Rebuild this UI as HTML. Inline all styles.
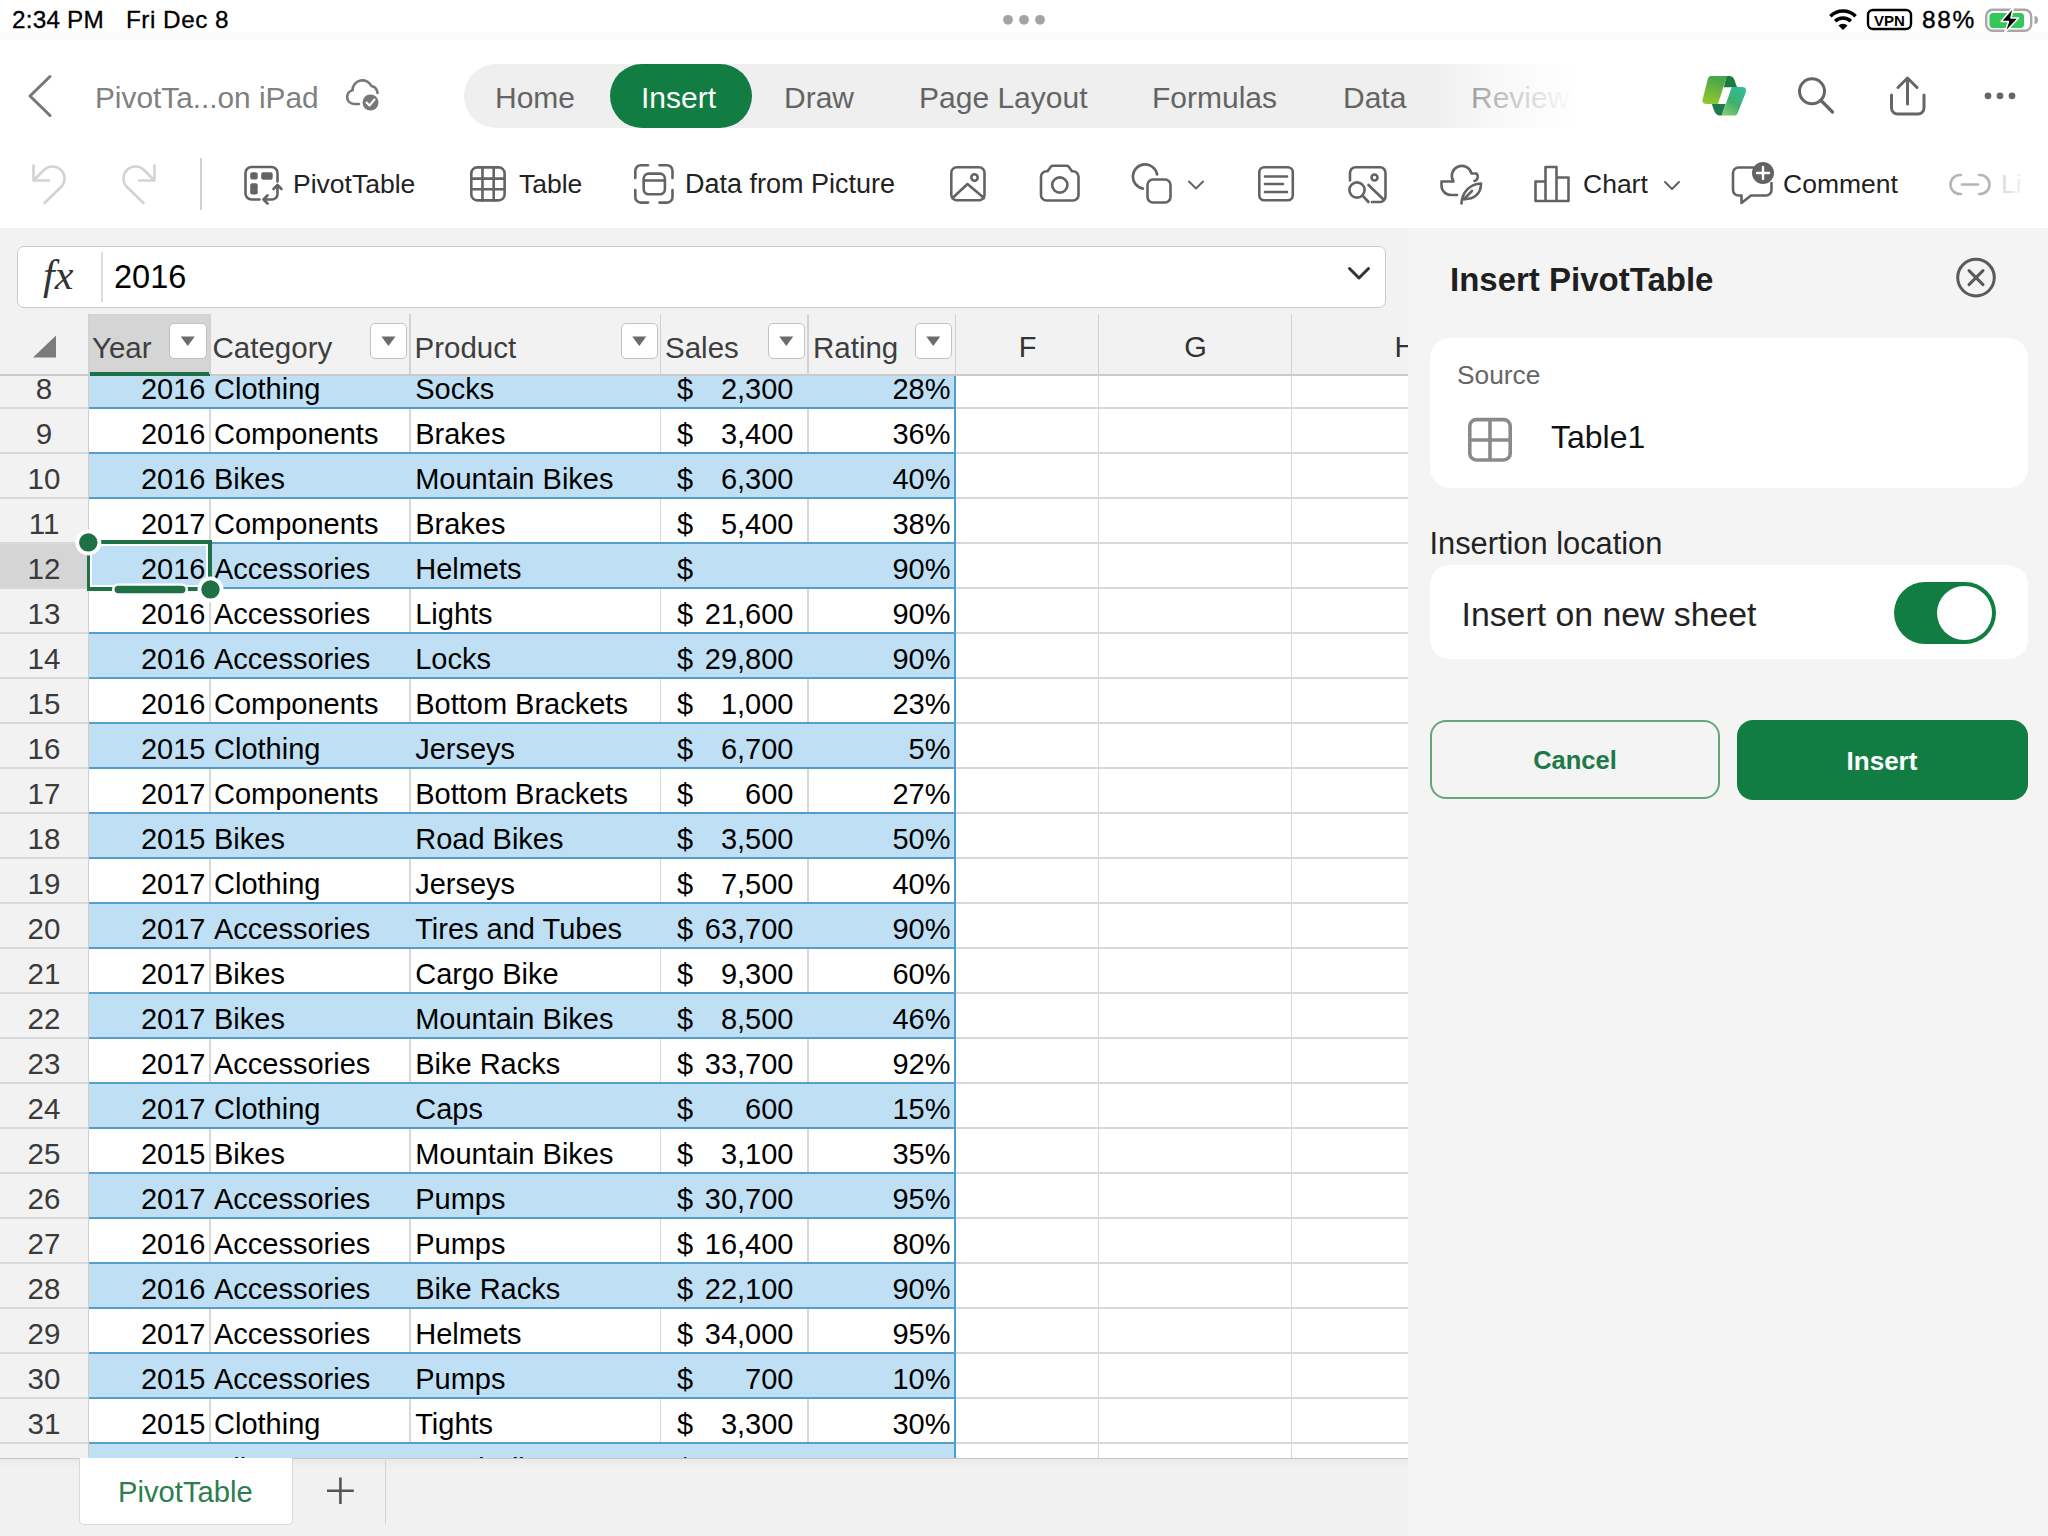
<!DOCTYPE html>
<html><head><meta charset="utf-8">
<style>
*{margin:0;padding:0;box-sizing:border-box}
html,body{width:2048px;height:1536px;overflow:hidden;background:#fff}
body{position:relative;font-family:"Liberation Sans",sans-serif;color:#222}
.a{position:absolute}
.t{position:absolute;white-space:nowrap;line-height:1}
svg{position:absolute;overflow:visible}
#grid{position:absolute;left:0;top:314px;width:1408px;height:1144px;overflow:hidden;background:#fff}
.c{position:absolute;white-space:nowrap;line-height:1;color:#000}
</style></head>
<body>
<div class="a" style="left:0;top:0;width:2048px;height:228px;background:#fff"></div>
<div class="a" style="left:0;top:32px;width:2048px;height:8px;background:#fbfbfb"></div>
<svg width="2048" height="230" style="left:0;top:0">
<circle cx="1008" cy="19.8" r="4.9" fill="#a3a3a3"/><circle cx="1024" cy="19.8" r="4.9" fill="#a3a3a3"/><circle cx="1040" cy="19.8" r="4.9" fill="#a3a3a3"/><g fill="none" stroke="#000" stroke-width="3.6" stroke-linecap="butt"><path d="M1830.4,16.2 A18,18 0 0 1 1855.6,16.2"/><path d="M1835.2,21.2 A11,11 0 0 1 1850.8,21.2"/></g><path d="M1838.4,25.6 A6.5,6.5 0 0 1 1847.6,25.6 L1843,30 Z" fill="#000"/><rect x="1868" y="10" width="43" height="19" rx="5" fill="none" stroke="#000" stroke-width="2.4"/><text x="1889.5" y="25.5" text-anchor="middle" font-family="Liberation Sans" font-weight="bold" font-size="15" fill="#000">VPN</text><rect x="1986.2" y="9.7" width="45" height="21" rx="6.5" fill="none" stroke="#a8a8a8" stroke-width="2.4"/><rect x="1989.5" y="13" width="34.5" height="15" rx="3.5" fill="#34c759"/><path d="M2034.5,16 a3.5,4 0 0 1 0,8 Z" fill="#a8a8a8"/><path d="M2013.5,7 L2001,21.5 H2008.5 L2004.5,33 L2018.5,18 H2011 Z" fill="#000" stroke="#fff" stroke-width="1.6" stroke-linejoin="round"/></svg>
<div class="t" style="left:1922px;top:8.07px;font-size:24.5px;color:#000;letter-spacing:1.6px;-webkit-text-stroke:0.4px #000">88%</div>
<div class="t" style="left:12px;top:8.34px;font-size:24.3px;color:#000;-webkit-text-stroke:0.3px #000;letter-spacing:0.2px">2:34 PM</div>
<div class="t" style="left:126px;top:8.34px;font-size:24.3px;color:#000;-webkit-text-stroke:0.3px #000;letter-spacing:0.5px">Fri Dec 8</div>
<svg width="2048" height="230" style="left:0;top:0">
<path d="M50,76.5 L30,96 L50,115.5" fill="none" stroke="#777" stroke-width="3" stroke-linecap="round" stroke-linejoin="round"/><path d="M359,104 H354 A7,7 0 0 1 352.5,90.2 A10,10 0 0 1 371.5,86 A8,8 0 0 1 377.5,93" fill="none" stroke="#777" stroke-width="2.6" stroke-linecap="round"/><circle cx="370.5" cy="102.5" r="9.5" fill="#fff"/><circle cx="370.5" cy="102.5" r="8" fill="#777"/><path d="M366.5,102.5 L369.5,105.5 L374.5,99.5" fill="none" stroke="#fff" stroke-width="2" stroke-linecap="round" stroke-linejoin="round"/><defs><linearGradient id="fade" x1="0" x2="1" y1="0" y2="0"><stop offset="0" stop-color="#fff" stop-opacity="0"/><stop offset="1" stop-color="#fff" stop-opacity="1"/></linearGradient><linearGradient id="cpL" x1="0" y1="1" x2="0.3" y2="0"><stop offset="0" stop-color="#9cca2e"/><stop offset="1" stop-color="#4aa64a"/></linearGradient><linearGradient id="cpR" x1="0.2" y1="1" x2="0.8" y2="0"><stop offset="0" stop-color="#86c870"/><stop offset="0.45" stop-color="#3fb070"/><stop offset="1" stop-color="#2ebd9c"/></linearGradient></defs><rect x="464" y="64" width="1140" height="64" rx="32" fill="#efefef"/><rect x="610" y="64" width="142" height="64" rx="32" fill="#117d43"/></svg>
<div class="t" style="left:495px;top:83.00px;font-size:30px;color:#646464;">Home</div>
<div class="t" style="left:919px;top:83.00px;font-size:30px;color:#646464;">Page Layout</div>
<div class="t" style="left:784px;top:83.00px;font-size:30px;color:#646464;">Draw</div>
<div class="t" style="left:1152px;top:83.00px;font-size:30px;color:#646464;">Formulas</div>
<div class="t" style="left:1343px;top:83.00px;font-size:30px;color:#646464;">Data</div>
<div class="t" style="left:1471px;top:83.00px;font-size:30px;color:#646464;">Review</div>
<div class="t" style="left:641px;top:83.00px;font-size:30px;color:#fff;">Insert</div>
<div class="a" style="left:1430px;top:60px;width:180px;height:72px;background:linear-gradient(90deg,rgba(255,255,255,0) 0%,rgba(255,255,255,0.55) 35%,#fff 80%)"></div>
<div class="t" style="left:95px;top:83.17px;font-size:29.8px;color:#808080;">PivotTa...on iPad</div>
<svg width="2048" height="230" style="left:0;top:0">
<path d="M1726.5,76.1 L1729.5,76.1 C1733.5,76.3 1735,80 1736,85 L1737.5,87.3 L1723.8,87.3 Z" fill="#1b7a40"/><path d="M1711,76.1 L1726.9,76.1 L1718,103.9 L1706,103.9 C1703,103.9 1702,101.8 1702.6,99.3 L1707.8,79.2 C1708.4,77.2 1709.5,76.1 1711,76.1 Z" fill="url(#cpL)"/><path d="M1712,103.9 L1725.6,103.9 L1721.8,115.6 L1719.5,115.6 C1715.5,115.2 1713.5,110 1712,103.9 Z" fill="#1c7a4c"/><path d="M1731.8,87.1 L1742.5,87.1 C1745.6,87.3 1746.6,89.6 1745.8,92.3 L1737.6,113.2 C1737,114.8 1736,115.6 1734.3,115.6 L1721.8,115.6 Z" fill="url(#cpR)"/><circle cx="1812" cy="91.3" r="12.5" fill="none" stroke="#666" stroke-width="3"/><path d="M1821,100.5 L1832.5,112" stroke="#666" stroke-width="3.2" stroke-linecap="round"/><g fill="none" stroke="#666" stroke-width="3" stroke-linecap="round" stroke-linejoin="round"><path d="M1891.5,95 V108 A6,6 0 0 0 1897.5,114 H1918 A6,6 0 0 0 1924,108 V95"/><path d="M1907.5,79 V104"/><path d="M1898,87.5 L1907.5,78 L1917,87.5"/></g><circle cx="1988" cy="95.8" r="3.4" fill="#666"/><circle cx="2000" cy="95.8" r="3.4" fill="#666"/><circle cx="2012" cy="95.8" r="3.4" fill="#666"/></svg>

<svg width="2048" height="230" style="left:0;top:0">
<g fill="none" stroke="#d3d3d3" stroke-width="2.6" stroke-linecap="round" stroke-linejoin="round"><path d="M33.5,165.5 V180.5 H49"/><path d="M34,180 L44,170 A12,12 0 0 1 61,187 L44.5,203"/></g><g fill="none" stroke="#d3d3d3" stroke-width="2.6" stroke-linecap="round" stroke-linejoin="round"><path d="M154.5,165.5 V180.5 H139"/><path d="M154,180 L144,170 A12,12 0 0 0 127,187 L143.5,203"/></g><rect x="200" y="158" width="2" height="52" fill="#d0d0d0"/><path d="M277.5,181.5 V173 A6,6 0 0 0 271.5,167 H251.5 A6,6 0 0 0 245.5,173 V193.5 A6,6 0 0 0 251.5,199.5 H259.5" fill="none" stroke="#636363" stroke-width="2.6" stroke-linecap="round" stroke-linejoin="round"/><rect x="250.2" y="172.2" width="7.5" height="7.4" rx="2" fill="#636363"/><rect x="261.2" y="172.2" width="11.5" height="7.6" rx="2" fill="#636363"/><rect x="250.2" y="183.2" width="7.5" height="11.4" rx="2" fill="#636363"/><path d="M264,199.5 H272 A5.5,5.5 0 0 0 277.5,194 V186" fill="none" stroke="#636363" stroke-width="2.6" stroke-linecap="round" stroke-linejoin="round"/><path d="M267.5,195.5 L263.5,199.5 L267.5,203.5" fill="none" stroke="#636363" stroke-width="2.6" stroke-linecap="round" stroke-linejoin="round"/><path d="M273.5,189 L277.5,185 L281.5,189" fill="none" stroke="#636363" stroke-width="2.6" stroke-linecap="round" stroke-linejoin="round"/><rect x="471.3" y="167.4" width="33.3" height="33" rx="6" fill="none" stroke="#636363" stroke-width="2.6" stroke-linecap="round" stroke-linejoin="round"/><path d="M482.5,167.5 V200.5 M493.7,167.5 V200.5 M471.5,178.6 H504.5 M471.5,189.3 H504.5" fill="none" stroke="#636363" stroke-width="2.6" stroke-linecap="round" stroke-linejoin="round"/><path d="M635.3,178 V171 A5.5,5.5 0 0 1 640.8,165.3 H648" fill="none" stroke="#636363" stroke-width="2.6" stroke-linecap="round" stroke-linejoin="round"/><path d="M659.5,165.3 H667 A5.5,5.5 0 0 1 672.5,171 V178" fill="none" stroke="#636363" stroke-width="2.6" stroke-linecap="round" stroke-linejoin="round"/><path d="M672.5,190 V197 A5.5,5.5 0 0 1 667,202.6 H659.5" fill="none" stroke="#636363" stroke-width="2.6" stroke-linecap="round" stroke-linejoin="round"/><path d="M648,202.6 H640.8 A5.5,5.5 0 0 1 635.3,197 V190" fill="none" stroke="#636363" stroke-width="2.6" stroke-linecap="round" stroke-linejoin="round"/><rect x="643.7" y="173.6" width="21.2" height="20.6" rx="5" fill="none" stroke="#636363" stroke-width="2.6" stroke-linecap="round" stroke-linejoin="round"/><path d="M644,180.5 H664.5" fill="none" stroke="#636363" stroke-width="2.6" stroke-linecap="round" stroke-linejoin="round"/><rect x="951.3" y="167.3" width="33.2" height="33" rx="5.5" fill="none" stroke="#636363" stroke-width="2.6" stroke-linecap="round" stroke-linejoin="round"/><path d="M952.5,198 L967.5,184 L984,198" fill="none" stroke="#636363" stroke-width="2.6" stroke-linecap="round" stroke-linejoin="round"/><circle cx="974.5" cy="177.5" r="3.2" fill="none" stroke="#636363" stroke-width="2.6" stroke-linecap="round" stroke-linejoin="round"/><path d="M1047.5,171.3 L1050.8,166.8 Q1051.6,165.8 1053,165.8 H1066.5 Q1067.9,165.8 1068.7,166.8 L1072,171.3 H1073 A5.5,5.5 0 0 1 1078.5,176.8 V195 A5.5,5.5 0 0 1 1073,200.5 H1046.5 A5.5,5.5 0 0 1 1041,195 V176.8 A5.5,5.5 0 0 1 1046.5,171.3 Z" fill="none" stroke="#636363" stroke-width="2.6" stroke-linecap="round" stroke-linejoin="round"/><circle cx="1059.8" cy="185" r="7.6" fill="none" stroke="#636363" stroke-width="2.6" stroke-linecap="round" stroke-linejoin="round"/><path d="M1143,188.6 A12.2,12.2 0 1 1 1157.1,174.4" fill="none" stroke="#636363" stroke-width="2.6" stroke-linecap="round" stroke-linejoin="round"/><rect x="1147.5" y="179.5" width="23" height="23" rx="5.5" fill="none" stroke="#636363" stroke-width="2.6" stroke-linecap="round" stroke-linejoin="round"/><path d="M1189,181.5 L1196,188.5 L1203,181.5" fill="none" stroke="#636363" stroke-width="2" stroke-linecap="round" stroke-linejoin="round"/><rect x="1259.3" y="167.3" width="33.5" height="33" rx="5" fill="none" stroke="#636363" stroke-width="2.6" stroke-linecap="round" stroke-linejoin="round"/><path d="M1265,176.5 H1287 M1265,184 H1283 M1265,192 H1287" fill="none" stroke="#636363" stroke-width="2.6" stroke-linecap="round" stroke-linejoin="round"/><path d="M1350,180.5 V173 A5.5,5.5 0 0 1 1355.5,167.3 H1380 A5.5,5.5 0 0 1 1385.5,173 V196.5 A5.5,5.5 0 0 1 1380,202 H1372" fill="none" stroke="#636363" stroke-width="2.6" stroke-linecap="round" stroke-linejoin="round"/><circle cx="1374.5" cy="177.5" r="3" fill="none" stroke="#636363" stroke-width="2.6" stroke-linecap="round" stroke-linejoin="round"/><path d="M1368.5,185 L1383,199" fill="none" stroke="#636363" stroke-width="2.6" stroke-linecap="round" stroke-linejoin="round"/><circle cx="1357" cy="190" r="7.6" fill="none" stroke="#636363" stroke-width="2.6" stroke-linecap="round" stroke-linejoin="round"/><path d="M1362.5,195.5 L1368.5,202" fill="none" stroke="#636363" stroke-width="2.6" stroke-linecap="round" stroke-linejoin="round"/><path d="M1457,195 H1451 A9.5,9.5 0 0 1 1441.5,185.5 V181.5 L1453.5,181.5 A10,10 0 1 1 1471.5,173.5 H1476.5 A4.5,4.5 0 0 1 1474.5,181" fill="none" stroke="#636363" stroke-width="2.6" stroke-linecap="round" stroke-linejoin="round"/><path d="M1461.5,203.5 C1462,192 1470,184 1481,183.5 C1481,194 1474,200 1462,199" fill="none" stroke="#636363" stroke-width="2.6" stroke-linecap="round" stroke-linejoin="round"/><path d="M1464,199 L1472,191" fill="none" stroke="#636363" stroke-width="2.6" stroke-linecap="round" stroke-linejoin="round"/><path d="M1535.5,201 V181.5 H1545.5 V201 M1545.5,201 V167 H1556.5 V201 M1556.5,177.5 H1568.5 V201 H1535.5" fill="none" stroke="#636363" stroke-width="2.6" stroke-linecap="round" stroke-linejoin="round"/><path d="M1665,182 L1672,189 L1679,182" fill="none" stroke="#636363" stroke-width="2" stroke-linecap="round" stroke-linejoin="round"/><path d="M1754,167.5 H1738.5 A5.5,5.5 0 0 0 1733,173 V190 A5.5,5.5 0 0 0 1738.5,195.5 H1741.5 V203 L1751,195.5 H1766 A5.5,5.5 0 0 0 1771.5,190 V183" fill="none" stroke="#636363" stroke-width="2.6" stroke-linecap="round" stroke-linejoin="round"/><circle cx="1763" cy="173" r="11" fill="#636363"/><path d="M1763,167 V179 M1757,173 H1769" stroke="#fff" stroke-width="2.4" stroke-linecap="round"/><g fill="none" stroke="#b5b5b5" stroke-width="2.6" stroke-linecap="round"><path d="M1961,175 H1960 A9.5,9.5 0 0 0 1960,194 H1961"/><path d="M1979,175 H1980 A9.5,9.5 0 0 1 1980,194 H1979"/><path d="M1962,184.5 H1978"/></g></svg>
<div class="t" style="left:293px;top:171.47px;font-size:26.5px;color:#222;">PivotTable</div>
<div class="t" style="left:519px;top:171.47px;font-size:26.5px;color:#222;">Table</div>
<div class="t" style="left:685px;top:171.05px;font-size:27px;color:#222;">Data from Picture</div>
<div class="t" style="left:1583px;top:171.47px;font-size:26.5px;color:#222;">Chart</div>
<div class="t" style="left:1783px;top:171.47px;font-size:26.5px;color:#222;">Comment</div>
<div class="t" style="left:2001px;top:171.47px;font-size:26.5px;color:#d0d0d0;">Li</div>
<div class="a" style="left:1990px;top:160px;width:58px;height:50px;background:linear-gradient(90deg,rgba(255,255,255,0),#fff 80%)"></div>

<div class="a" style="left:0;top:228px;width:1408px;height:86px;background:#f2f2f2"></div>
<div class="a" style="left:16.5px;top:246px;width:1369px;height:61.5px;background:#fff;border:1.5px solid #cbcbcb;border-radius:7px"></div>
<div class="t" style="left:43px;top:253.5px;font-family:'Liberation Serif',serif;font-style:italic;font-size:42px;color:#333">fx</div>
<div class="a" style="left:101px;top:252px;width:1.5px;height:50px;background:#dcdcdc;"></div>
<div class="t" style="left:114px;top:260.88px;font-size:32.5px;color:#000;">2016</div>
<svg width="10" height="10" style="left:0;top:0"><path d="M1349.5,268.5 L1359,278 L1368.5,268.5" fill="none" stroke="#333" stroke-width="3" stroke-linecap="round" stroke-linejoin="round"/></svg>

<div id="grid">
<div class="a" style="left:0;top:-314px;width:1408px;height:1536px">
<div class="a" style="left:89px;top:364px;width:866px;height:43px;background:#bfe0f4;"></div>
<div class="a" style="left:89px;top:454px;width:866px;height:43px;background:#bfe0f4;"></div>
<div class="a" style="left:89px;top:544px;width:866px;height:43px;background:#bfe0f4;"></div>
<div class="a" style="left:89px;top:634px;width:866px;height:43px;background:#bfe0f4;"></div>
<div class="a" style="left:89px;top:724px;width:866px;height:43px;background:#bfe0f4;"></div>
<div class="a" style="left:89px;top:814px;width:866px;height:43px;background:#bfe0f4;"></div>
<div class="a" style="left:89px;top:904px;width:866px;height:43px;background:#bfe0f4;"></div>
<div class="a" style="left:89px;top:994px;width:866px;height:43px;background:#bfe0f4;"></div>
<div class="a" style="left:89px;top:1084px;width:866px;height:43px;background:#bfe0f4;"></div>
<div class="a" style="left:89px;top:1174px;width:866px;height:43px;background:#bfe0f4;"></div>
<div class="a" style="left:89px;top:1264px;width:866px;height:43px;background:#bfe0f4;"></div>
<div class="a" style="left:89px;top:1354px;width:866px;height:43px;background:#bfe0f4;"></div>
<div class="a" style="left:89px;top:1444px;width:866px;height:43px;background:#bfe0f4;"></div>
<div class="a" style="left:209.3px;top:409px;width:1.5px;height:43px;background:#d8d8d8;"></div>
<div class="a" style="left:409.3px;top:409px;width:1.5px;height:43px;background:#d8d8d8;"></div>
<div class="a" style="left:659.8px;top:409px;width:1.5px;height:43px;background:#d8d8d8;"></div>
<div class="a" style="left:807.3px;top:409px;width:1.5px;height:43px;background:#d8d8d8;"></div>
<div class="a" style="left:209.3px;top:499px;width:1.5px;height:43px;background:#d8d8d8;"></div>
<div class="a" style="left:409.3px;top:499px;width:1.5px;height:43px;background:#d8d8d8;"></div>
<div class="a" style="left:659.8px;top:499px;width:1.5px;height:43px;background:#d8d8d8;"></div>
<div class="a" style="left:807.3px;top:499px;width:1.5px;height:43px;background:#d8d8d8;"></div>
<div class="a" style="left:209.3px;top:589px;width:1.5px;height:43px;background:#d8d8d8;"></div>
<div class="a" style="left:409.3px;top:589px;width:1.5px;height:43px;background:#d8d8d8;"></div>
<div class="a" style="left:659.8px;top:589px;width:1.5px;height:43px;background:#d8d8d8;"></div>
<div class="a" style="left:807.3px;top:589px;width:1.5px;height:43px;background:#d8d8d8;"></div>
<div class="a" style="left:209.3px;top:679px;width:1.5px;height:43px;background:#d8d8d8;"></div>
<div class="a" style="left:409.3px;top:679px;width:1.5px;height:43px;background:#d8d8d8;"></div>
<div class="a" style="left:659.8px;top:679px;width:1.5px;height:43px;background:#d8d8d8;"></div>
<div class="a" style="left:807.3px;top:679px;width:1.5px;height:43px;background:#d8d8d8;"></div>
<div class="a" style="left:209.3px;top:769px;width:1.5px;height:43px;background:#d8d8d8;"></div>
<div class="a" style="left:409.3px;top:769px;width:1.5px;height:43px;background:#d8d8d8;"></div>
<div class="a" style="left:659.8px;top:769px;width:1.5px;height:43px;background:#d8d8d8;"></div>
<div class="a" style="left:807.3px;top:769px;width:1.5px;height:43px;background:#d8d8d8;"></div>
<div class="a" style="left:209.3px;top:859px;width:1.5px;height:43px;background:#d8d8d8;"></div>
<div class="a" style="left:409.3px;top:859px;width:1.5px;height:43px;background:#d8d8d8;"></div>
<div class="a" style="left:659.8px;top:859px;width:1.5px;height:43px;background:#d8d8d8;"></div>
<div class="a" style="left:807.3px;top:859px;width:1.5px;height:43px;background:#d8d8d8;"></div>
<div class="a" style="left:209.3px;top:949px;width:1.5px;height:43px;background:#d8d8d8;"></div>
<div class="a" style="left:409.3px;top:949px;width:1.5px;height:43px;background:#d8d8d8;"></div>
<div class="a" style="left:659.8px;top:949px;width:1.5px;height:43px;background:#d8d8d8;"></div>
<div class="a" style="left:807.3px;top:949px;width:1.5px;height:43px;background:#d8d8d8;"></div>
<div class="a" style="left:209.3px;top:1039px;width:1.5px;height:43px;background:#d8d8d8;"></div>
<div class="a" style="left:409.3px;top:1039px;width:1.5px;height:43px;background:#d8d8d8;"></div>
<div class="a" style="left:659.8px;top:1039px;width:1.5px;height:43px;background:#d8d8d8;"></div>
<div class="a" style="left:807.3px;top:1039px;width:1.5px;height:43px;background:#d8d8d8;"></div>
<div class="a" style="left:209.3px;top:1129px;width:1.5px;height:43px;background:#d8d8d8;"></div>
<div class="a" style="left:409.3px;top:1129px;width:1.5px;height:43px;background:#d8d8d8;"></div>
<div class="a" style="left:659.8px;top:1129px;width:1.5px;height:43px;background:#d8d8d8;"></div>
<div class="a" style="left:807.3px;top:1129px;width:1.5px;height:43px;background:#d8d8d8;"></div>
<div class="a" style="left:209.3px;top:1219px;width:1.5px;height:43px;background:#d8d8d8;"></div>
<div class="a" style="left:409.3px;top:1219px;width:1.5px;height:43px;background:#d8d8d8;"></div>
<div class="a" style="left:659.8px;top:1219px;width:1.5px;height:43px;background:#d8d8d8;"></div>
<div class="a" style="left:807.3px;top:1219px;width:1.5px;height:43px;background:#d8d8d8;"></div>
<div class="a" style="left:209.3px;top:1309px;width:1.5px;height:43px;background:#d8d8d8;"></div>
<div class="a" style="left:409.3px;top:1309px;width:1.5px;height:43px;background:#d8d8d8;"></div>
<div class="a" style="left:659.8px;top:1309px;width:1.5px;height:43px;background:#d8d8d8;"></div>
<div class="a" style="left:807.3px;top:1309px;width:1.5px;height:43px;background:#d8d8d8;"></div>
<div class="a" style="left:209.3px;top:1399px;width:1.5px;height:43px;background:#d8d8d8;"></div>
<div class="a" style="left:409.3px;top:1399px;width:1.5px;height:43px;background:#d8d8d8;"></div>
<div class="a" style="left:659.8px;top:1399px;width:1.5px;height:43px;background:#d8d8d8;"></div>
<div class="a" style="left:807.3px;top:1399px;width:1.5px;height:43px;background:#d8d8d8;"></div>
<div class="a" style="left:1097.8px;top:376px;width:1.6px;height:1144px;background:#d8d8d8;"></div>
<div class="a" style="left:1290.5px;top:376px;width:1.6px;height:1144px;background:#d8d8d8;"></div>
<div class="a" style="left:0px;top:362px;width:88px;height:2px;background:#d8d8d8;"></div>
<div class="a" style="left:89px;top:362px;width:867px;height:2px;background:#549dcc;"></div>
<div class="a" style="left:956px;top:362px;width:452px;height:2px;background:#d8d8d8;"></div>
<div class="a" style="left:0px;top:407px;width:88px;height:2px;background:#d8d8d8;"></div>
<div class="a" style="left:89px;top:407px;width:867px;height:2px;background:#549dcc;"></div>
<div class="a" style="left:956px;top:407px;width:452px;height:2px;background:#d8d8d8;"></div>
<div class="a" style="left:0px;top:452px;width:88px;height:2px;background:#d8d8d8;"></div>
<div class="a" style="left:89px;top:452px;width:867px;height:2px;background:#549dcc;"></div>
<div class="a" style="left:956px;top:452px;width:452px;height:2px;background:#d8d8d8;"></div>
<div class="a" style="left:0px;top:497px;width:88px;height:2px;background:#d8d8d8;"></div>
<div class="a" style="left:89px;top:497px;width:867px;height:2px;background:#549dcc;"></div>
<div class="a" style="left:956px;top:497px;width:452px;height:2px;background:#d8d8d8;"></div>
<div class="a" style="left:0px;top:542px;width:88px;height:2px;background:#d8d8d8;"></div>
<div class="a" style="left:89px;top:542px;width:867px;height:2px;background:#549dcc;"></div>
<div class="a" style="left:956px;top:542px;width:452px;height:2px;background:#d8d8d8;"></div>
<div class="a" style="left:0px;top:587px;width:88px;height:2px;background:#d8d8d8;"></div>
<div class="a" style="left:89px;top:587px;width:867px;height:2px;background:#549dcc;"></div>
<div class="a" style="left:956px;top:587px;width:452px;height:2px;background:#d8d8d8;"></div>
<div class="a" style="left:0px;top:632px;width:88px;height:2px;background:#d8d8d8;"></div>
<div class="a" style="left:89px;top:632px;width:867px;height:2px;background:#549dcc;"></div>
<div class="a" style="left:956px;top:632px;width:452px;height:2px;background:#d8d8d8;"></div>
<div class="a" style="left:0px;top:677px;width:88px;height:2px;background:#d8d8d8;"></div>
<div class="a" style="left:89px;top:677px;width:867px;height:2px;background:#549dcc;"></div>
<div class="a" style="left:956px;top:677px;width:452px;height:2px;background:#d8d8d8;"></div>
<div class="a" style="left:0px;top:722px;width:88px;height:2px;background:#d8d8d8;"></div>
<div class="a" style="left:89px;top:722px;width:867px;height:2px;background:#549dcc;"></div>
<div class="a" style="left:956px;top:722px;width:452px;height:2px;background:#d8d8d8;"></div>
<div class="a" style="left:0px;top:767px;width:88px;height:2px;background:#d8d8d8;"></div>
<div class="a" style="left:89px;top:767px;width:867px;height:2px;background:#549dcc;"></div>
<div class="a" style="left:956px;top:767px;width:452px;height:2px;background:#d8d8d8;"></div>
<div class="a" style="left:0px;top:812px;width:88px;height:2px;background:#d8d8d8;"></div>
<div class="a" style="left:89px;top:812px;width:867px;height:2px;background:#549dcc;"></div>
<div class="a" style="left:956px;top:812px;width:452px;height:2px;background:#d8d8d8;"></div>
<div class="a" style="left:0px;top:857px;width:88px;height:2px;background:#d8d8d8;"></div>
<div class="a" style="left:89px;top:857px;width:867px;height:2px;background:#549dcc;"></div>
<div class="a" style="left:956px;top:857px;width:452px;height:2px;background:#d8d8d8;"></div>
<div class="a" style="left:0px;top:902px;width:88px;height:2px;background:#d8d8d8;"></div>
<div class="a" style="left:89px;top:902px;width:867px;height:2px;background:#549dcc;"></div>
<div class="a" style="left:956px;top:902px;width:452px;height:2px;background:#d8d8d8;"></div>
<div class="a" style="left:0px;top:947px;width:88px;height:2px;background:#d8d8d8;"></div>
<div class="a" style="left:89px;top:947px;width:867px;height:2px;background:#549dcc;"></div>
<div class="a" style="left:956px;top:947px;width:452px;height:2px;background:#d8d8d8;"></div>
<div class="a" style="left:0px;top:992px;width:88px;height:2px;background:#d8d8d8;"></div>
<div class="a" style="left:89px;top:992px;width:867px;height:2px;background:#549dcc;"></div>
<div class="a" style="left:956px;top:992px;width:452px;height:2px;background:#d8d8d8;"></div>
<div class="a" style="left:0px;top:1037px;width:88px;height:2px;background:#d8d8d8;"></div>
<div class="a" style="left:89px;top:1037px;width:867px;height:2px;background:#549dcc;"></div>
<div class="a" style="left:956px;top:1037px;width:452px;height:2px;background:#d8d8d8;"></div>
<div class="a" style="left:0px;top:1082px;width:88px;height:2px;background:#d8d8d8;"></div>
<div class="a" style="left:89px;top:1082px;width:867px;height:2px;background:#549dcc;"></div>
<div class="a" style="left:956px;top:1082px;width:452px;height:2px;background:#d8d8d8;"></div>
<div class="a" style="left:0px;top:1127px;width:88px;height:2px;background:#d8d8d8;"></div>
<div class="a" style="left:89px;top:1127px;width:867px;height:2px;background:#549dcc;"></div>
<div class="a" style="left:956px;top:1127px;width:452px;height:2px;background:#d8d8d8;"></div>
<div class="a" style="left:0px;top:1172px;width:88px;height:2px;background:#d8d8d8;"></div>
<div class="a" style="left:89px;top:1172px;width:867px;height:2px;background:#549dcc;"></div>
<div class="a" style="left:956px;top:1172px;width:452px;height:2px;background:#d8d8d8;"></div>
<div class="a" style="left:0px;top:1217px;width:88px;height:2px;background:#d8d8d8;"></div>
<div class="a" style="left:89px;top:1217px;width:867px;height:2px;background:#549dcc;"></div>
<div class="a" style="left:956px;top:1217px;width:452px;height:2px;background:#d8d8d8;"></div>
<div class="a" style="left:0px;top:1262px;width:88px;height:2px;background:#d8d8d8;"></div>
<div class="a" style="left:89px;top:1262px;width:867px;height:2px;background:#549dcc;"></div>
<div class="a" style="left:956px;top:1262px;width:452px;height:2px;background:#d8d8d8;"></div>
<div class="a" style="left:0px;top:1307px;width:88px;height:2px;background:#d8d8d8;"></div>
<div class="a" style="left:89px;top:1307px;width:867px;height:2px;background:#549dcc;"></div>
<div class="a" style="left:956px;top:1307px;width:452px;height:2px;background:#d8d8d8;"></div>
<div class="a" style="left:0px;top:1352px;width:88px;height:2px;background:#d8d8d8;"></div>
<div class="a" style="left:89px;top:1352px;width:867px;height:2px;background:#549dcc;"></div>
<div class="a" style="left:956px;top:1352px;width:452px;height:2px;background:#d8d8d8;"></div>
<div class="a" style="left:0px;top:1397px;width:88px;height:2px;background:#d8d8d8;"></div>
<div class="a" style="left:89px;top:1397px;width:867px;height:2px;background:#549dcc;"></div>
<div class="a" style="left:956px;top:1397px;width:452px;height:2px;background:#d8d8d8;"></div>
<div class="a" style="left:0px;top:1442px;width:88px;height:2px;background:#d8d8d8;"></div>
<div class="a" style="left:89px;top:1442px;width:867px;height:2px;background:#549dcc;"></div>
<div class="a" style="left:956px;top:1442px;width:452px;height:2px;background:#d8d8d8;"></div>
<div class="a" style="left:0px;top:1487px;width:88px;height:2px;background:#d8d8d8;"></div>
<div class="a" style="left:89px;top:1487px;width:867px;height:2px;background:#549dcc;"></div>
<div class="a" style="left:956px;top:1487px;width:452px;height:2px;background:#d8d8d8;"></div>
<div class="a" style="left:954px;top:376px;width:2px;height:1100px;background:#4c9fd0;"></div>
<div class="a" style="left:0px;top:376px;width:88px;height:1100px;background:rgba(0,0,0,0);"></div>
<div class="t" style="left:-794.5px;width:1000px;text-align:right;top:374.85px;font-size:29px;color:#000;">2016</div>
<div class="t" style="left:214px;top:374.85px;font-size:29px;color:#000;">Clothing</div>
<div class="t" style="left:415.2px;top:374.85px;font-size:29px;color:#000;">Socks</div>
<div class="t" style="left:677px;top:374.85px;font-size:29px;color:#000;">$</div>
<div class="t" style="left:-206.5px;width:1000px;text-align:right;top:374.85px;font-size:29px;color:#000;">2,300</div>
<div class="t" style="left:-49.5px;width:1000px;text-align:right;top:374.85px;font-size:29px;color:#000;">28%</div>
<div class="t" style="left:-794.5px;width:1000px;text-align:right;top:419.85px;font-size:29px;color:#000;">2016</div>
<div class="t" style="left:214px;top:419.85px;font-size:29px;color:#000;">Components</div>
<div class="t" style="left:415.2px;top:419.85px;font-size:29px;color:#000;">Brakes</div>
<div class="t" style="left:677px;top:419.85px;font-size:29px;color:#000;">$</div>
<div class="t" style="left:-206.5px;width:1000px;text-align:right;top:419.85px;font-size:29px;color:#000;">3,400</div>
<div class="t" style="left:-49.5px;width:1000px;text-align:right;top:419.85px;font-size:29px;color:#000;">36%</div>
<div class="t" style="left:-794.5px;width:1000px;text-align:right;top:464.85px;font-size:29px;color:#000;">2016</div>
<div class="t" style="left:214px;top:464.85px;font-size:29px;color:#000;">Bikes</div>
<div class="t" style="left:415.2px;top:464.85px;font-size:29px;color:#000;">Mountain Bikes</div>
<div class="t" style="left:677px;top:464.85px;font-size:29px;color:#000;">$</div>
<div class="t" style="left:-206.5px;width:1000px;text-align:right;top:464.85px;font-size:29px;color:#000;">6,300</div>
<div class="t" style="left:-49.5px;width:1000px;text-align:right;top:464.85px;font-size:29px;color:#000;">40%</div>
<div class="t" style="left:-794.5px;width:1000px;text-align:right;top:509.85px;font-size:29px;color:#000;">2017</div>
<div class="t" style="left:214px;top:509.85px;font-size:29px;color:#000;">Components</div>
<div class="t" style="left:415.2px;top:509.85px;font-size:29px;color:#000;">Brakes</div>
<div class="t" style="left:677px;top:509.85px;font-size:29px;color:#000;">$</div>
<div class="t" style="left:-206.5px;width:1000px;text-align:right;top:509.85px;font-size:29px;color:#000;">5,400</div>
<div class="t" style="left:-49.5px;width:1000px;text-align:right;top:509.85px;font-size:29px;color:#000;">38%</div>
<div class="t" style="left:-794.5px;width:1000px;text-align:right;top:554.85px;font-size:29px;color:#000;">2016</div>
<div class="t" style="left:214px;top:554.85px;font-size:29px;color:#000;">Accessories</div>
<div class="t" style="left:415.2px;top:554.85px;font-size:29px;color:#000;">Helmets</div>
<div class="t" style="left:677px;top:554.85px;font-size:29px;color:#000;">$</div>
<div class="t" style="left:-49.5px;width:1000px;text-align:right;top:554.85px;font-size:29px;color:#000;">90%</div>
<div class="t" style="left:-794.5px;width:1000px;text-align:right;top:599.85px;font-size:29px;color:#000;">2016</div>
<div class="t" style="left:214px;top:599.85px;font-size:29px;color:#000;">Accessories</div>
<div class="t" style="left:415.2px;top:599.85px;font-size:29px;color:#000;">Lights</div>
<div class="t" style="left:677px;top:599.85px;font-size:29px;color:#000;">$</div>
<div class="t" style="left:-206.5px;width:1000px;text-align:right;top:599.85px;font-size:29px;color:#000;">21,600</div>
<div class="t" style="left:-49.5px;width:1000px;text-align:right;top:599.85px;font-size:29px;color:#000;">90%</div>
<div class="t" style="left:-794.5px;width:1000px;text-align:right;top:644.85px;font-size:29px;color:#000;">2016</div>
<div class="t" style="left:214px;top:644.85px;font-size:29px;color:#000;">Accessories</div>
<div class="t" style="left:415.2px;top:644.85px;font-size:29px;color:#000;">Locks</div>
<div class="t" style="left:677px;top:644.85px;font-size:29px;color:#000;">$</div>
<div class="t" style="left:-206.5px;width:1000px;text-align:right;top:644.85px;font-size:29px;color:#000;">29,800</div>
<div class="t" style="left:-49.5px;width:1000px;text-align:right;top:644.85px;font-size:29px;color:#000;">90%</div>
<div class="t" style="left:-794.5px;width:1000px;text-align:right;top:689.85px;font-size:29px;color:#000;">2016</div>
<div class="t" style="left:214px;top:689.85px;font-size:29px;color:#000;">Components</div>
<div class="t" style="left:415.2px;top:689.85px;font-size:29px;color:#000;">Bottom Brackets</div>
<div class="t" style="left:677px;top:689.85px;font-size:29px;color:#000;">$</div>
<div class="t" style="left:-206.5px;width:1000px;text-align:right;top:689.85px;font-size:29px;color:#000;">1,000</div>
<div class="t" style="left:-49.5px;width:1000px;text-align:right;top:689.85px;font-size:29px;color:#000;">23%</div>
<div class="t" style="left:-794.5px;width:1000px;text-align:right;top:734.85px;font-size:29px;color:#000;">2015</div>
<div class="t" style="left:214px;top:734.85px;font-size:29px;color:#000;">Clothing</div>
<div class="t" style="left:415.2px;top:734.85px;font-size:29px;color:#000;">Jerseys</div>
<div class="t" style="left:677px;top:734.85px;font-size:29px;color:#000;">$</div>
<div class="t" style="left:-206.5px;width:1000px;text-align:right;top:734.85px;font-size:29px;color:#000;">6,700</div>
<div class="t" style="left:-49.5px;width:1000px;text-align:right;top:734.85px;font-size:29px;color:#000;">5%</div>
<div class="t" style="left:-794.5px;width:1000px;text-align:right;top:779.85px;font-size:29px;color:#000;">2017</div>
<div class="t" style="left:214px;top:779.85px;font-size:29px;color:#000;">Components</div>
<div class="t" style="left:415.2px;top:779.85px;font-size:29px;color:#000;">Bottom Brackets</div>
<div class="t" style="left:677px;top:779.85px;font-size:29px;color:#000;">$</div>
<div class="t" style="left:-206.5px;width:1000px;text-align:right;top:779.85px;font-size:29px;color:#000;">600</div>
<div class="t" style="left:-49.5px;width:1000px;text-align:right;top:779.85px;font-size:29px;color:#000;">27%</div>
<div class="t" style="left:-794.5px;width:1000px;text-align:right;top:824.85px;font-size:29px;color:#000;">2015</div>
<div class="t" style="left:214px;top:824.85px;font-size:29px;color:#000;">Bikes</div>
<div class="t" style="left:415.2px;top:824.85px;font-size:29px;color:#000;">Road Bikes</div>
<div class="t" style="left:677px;top:824.85px;font-size:29px;color:#000;">$</div>
<div class="t" style="left:-206.5px;width:1000px;text-align:right;top:824.85px;font-size:29px;color:#000;">3,500</div>
<div class="t" style="left:-49.5px;width:1000px;text-align:right;top:824.85px;font-size:29px;color:#000;">50%</div>
<div class="t" style="left:-794.5px;width:1000px;text-align:right;top:869.85px;font-size:29px;color:#000;">2017</div>
<div class="t" style="left:214px;top:869.85px;font-size:29px;color:#000;">Clothing</div>
<div class="t" style="left:415.2px;top:869.85px;font-size:29px;color:#000;">Jerseys</div>
<div class="t" style="left:677px;top:869.85px;font-size:29px;color:#000;">$</div>
<div class="t" style="left:-206.5px;width:1000px;text-align:right;top:869.85px;font-size:29px;color:#000;">7,500</div>
<div class="t" style="left:-49.5px;width:1000px;text-align:right;top:869.85px;font-size:29px;color:#000;">40%</div>
<div class="t" style="left:-794.5px;width:1000px;text-align:right;top:914.85px;font-size:29px;color:#000;">2017</div>
<div class="t" style="left:214px;top:914.85px;font-size:29px;color:#000;">Accessories</div>
<div class="t" style="left:415.2px;top:914.85px;font-size:29px;color:#000;">Tires and Tubes</div>
<div class="t" style="left:677px;top:914.85px;font-size:29px;color:#000;">$</div>
<div class="t" style="left:-206.5px;width:1000px;text-align:right;top:914.85px;font-size:29px;color:#000;">63,700</div>
<div class="t" style="left:-49.5px;width:1000px;text-align:right;top:914.85px;font-size:29px;color:#000;">90%</div>
<div class="t" style="left:-794.5px;width:1000px;text-align:right;top:959.85px;font-size:29px;color:#000;">2017</div>
<div class="t" style="left:214px;top:959.85px;font-size:29px;color:#000;">Bikes</div>
<div class="t" style="left:415.2px;top:959.85px;font-size:29px;color:#000;">Cargo Bike</div>
<div class="t" style="left:677px;top:959.85px;font-size:29px;color:#000;">$</div>
<div class="t" style="left:-206.5px;width:1000px;text-align:right;top:959.85px;font-size:29px;color:#000;">9,300</div>
<div class="t" style="left:-49.5px;width:1000px;text-align:right;top:959.85px;font-size:29px;color:#000;">60%</div>
<div class="t" style="left:-794.5px;width:1000px;text-align:right;top:1004.85px;font-size:29px;color:#000;">2017</div>
<div class="t" style="left:214px;top:1004.85px;font-size:29px;color:#000;">Bikes</div>
<div class="t" style="left:415.2px;top:1004.85px;font-size:29px;color:#000;">Mountain Bikes</div>
<div class="t" style="left:677px;top:1004.85px;font-size:29px;color:#000;">$</div>
<div class="t" style="left:-206.5px;width:1000px;text-align:right;top:1004.85px;font-size:29px;color:#000;">8,500</div>
<div class="t" style="left:-49.5px;width:1000px;text-align:right;top:1004.85px;font-size:29px;color:#000;">46%</div>
<div class="t" style="left:-794.5px;width:1000px;text-align:right;top:1049.85px;font-size:29px;color:#000;">2017</div>
<div class="t" style="left:214px;top:1049.85px;font-size:29px;color:#000;">Accessories</div>
<div class="t" style="left:415.2px;top:1049.85px;font-size:29px;color:#000;">Bike Racks</div>
<div class="t" style="left:677px;top:1049.85px;font-size:29px;color:#000;">$</div>
<div class="t" style="left:-206.5px;width:1000px;text-align:right;top:1049.85px;font-size:29px;color:#000;">33,700</div>
<div class="t" style="left:-49.5px;width:1000px;text-align:right;top:1049.85px;font-size:29px;color:#000;">92%</div>
<div class="t" style="left:-794.5px;width:1000px;text-align:right;top:1094.85px;font-size:29px;color:#000;">2017</div>
<div class="t" style="left:214px;top:1094.85px;font-size:29px;color:#000;">Clothing</div>
<div class="t" style="left:415.2px;top:1094.85px;font-size:29px;color:#000;">Caps</div>
<div class="t" style="left:677px;top:1094.85px;font-size:29px;color:#000;">$</div>
<div class="t" style="left:-206.5px;width:1000px;text-align:right;top:1094.85px;font-size:29px;color:#000;">600</div>
<div class="t" style="left:-49.5px;width:1000px;text-align:right;top:1094.85px;font-size:29px;color:#000;">15%</div>
<div class="t" style="left:-794.5px;width:1000px;text-align:right;top:1139.85px;font-size:29px;color:#000;">2015</div>
<div class="t" style="left:214px;top:1139.85px;font-size:29px;color:#000;">Bikes</div>
<div class="t" style="left:415.2px;top:1139.85px;font-size:29px;color:#000;">Mountain Bikes</div>
<div class="t" style="left:677px;top:1139.85px;font-size:29px;color:#000;">$</div>
<div class="t" style="left:-206.5px;width:1000px;text-align:right;top:1139.85px;font-size:29px;color:#000;">3,100</div>
<div class="t" style="left:-49.5px;width:1000px;text-align:right;top:1139.85px;font-size:29px;color:#000;">35%</div>
<div class="t" style="left:-794.5px;width:1000px;text-align:right;top:1184.85px;font-size:29px;color:#000;">2017</div>
<div class="t" style="left:214px;top:1184.85px;font-size:29px;color:#000;">Accessories</div>
<div class="t" style="left:415.2px;top:1184.85px;font-size:29px;color:#000;">Pumps</div>
<div class="t" style="left:677px;top:1184.85px;font-size:29px;color:#000;">$</div>
<div class="t" style="left:-206.5px;width:1000px;text-align:right;top:1184.85px;font-size:29px;color:#000;">30,700</div>
<div class="t" style="left:-49.5px;width:1000px;text-align:right;top:1184.85px;font-size:29px;color:#000;">95%</div>
<div class="t" style="left:-794.5px;width:1000px;text-align:right;top:1229.85px;font-size:29px;color:#000;">2016</div>
<div class="t" style="left:214px;top:1229.85px;font-size:29px;color:#000;">Accessories</div>
<div class="t" style="left:415.2px;top:1229.85px;font-size:29px;color:#000;">Pumps</div>
<div class="t" style="left:677px;top:1229.85px;font-size:29px;color:#000;">$</div>
<div class="t" style="left:-206.5px;width:1000px;text-align:right;top:1229.85px;font-size:29px;color:#000;">16,400</div>
<div class="t" style="left:-49.5px;width:1000px;text-align:right;top:1229.85px;font-size:29px;color:#000;">80%</div>
<div class="t" style="left:-794.5px;width:1000px;text-align:right;top:1274.85px;font-size:29px;color:#000;">2016</div>
<div class="t" style="left:214px;top:1274.85px;font-size:29px;color:#000;">Accessories</div>
<div class="t" style="left:415.2px;top:1274.85px;font-size:29px;color:#000;">Bike Racks</div>
<div class="t" style="left:677px;top:1274.85px;font-size:29px;color:#000;">$</div>
<div class="t" style="left:-206.5px;width:1000px;text-align:right;top:1274.85px;font-size:29px;color:#000;">22,100</div>
<div class="t" style="left:-49.5px;width:1000px;text-align:right;top:1274.85px;font-size:29px;color:#000;">90%</div>
<div class="t" style="left:-794.5px;width:1000px;text-align:right;top:1319.85px;font-size:29px;color:#000;">2017</div>
<div class="t" style="left:214px;top:1319.85px;font-size:29px;color:#000;">Accessories</div>
<div class="t" style="left:415.2px;top:1319.85px;font-size:29px;color:#000;">Helmets</div>
<div class="t" style="left:677px;top:1319.85px;font-size:29px;color:#000;">$</div>
<div class="t" style="left:-206.5px;width:1000px;text-align:right;top:1319.85px;font-size:29px;color:#000;">34,000</div>
<div class="t" style="left:-49.5px;width:1000px;text-align:right;top:1319.85px;font-size:29px;color:#000;">95%</div>
<div class="t" style="left:-794.5px;width:1000px;text-align:right;top:1364.85px;font-size:29px;color:#000;">2015</div>
<div class="t" style="left:214px;top:1364.85px;font-size:29px;color:#000;">Accessories</div>
<div class="t" style="left:415.2px;top:1364.85px;font-size:29px;color:#000;">Pumps</div>
<div class="t" style="left:677px;top:1364.85px;font-size:29px;color:#000;">$</div>
<div class="t" style="left:-206.5px;width:1000px;text-align:right;top:1364.85px;font-size:29px;color:#000;">700</div>
<div class="t" style="left:-49.5px;width:1000px;text-align:right;top:1364.85px;font-size:29px;color:#000;">10%</div>
<div class="t" style="left:-794.5px;width:1000px;text-align:right;top:1409.85px;font-size:29px;color:#000;">2015</div>
<div class="t" style="left:214px;top:1409.85px;font-size:29px;color:#000;">Clothing</div>
<div class="t" style="left:415.2px;top:1409.85px;font-size:29px;color:#000;">Tights</div>
<div class="t" style="left:677px;top:1409.85px;font-size:29px;color:#000;">$</div>
<div class="t" style="left:-206.5px;width:1000px;text-align:right;top:1409.85px;font-size:29px;color:#000;">3,300</div>
<div class="t" style="left:-49.5px;width:1000px;text-align:right;top:1409.85px;font-size:29px;color:#000;">30%</div>
<div class="t" style="left:-794.5px;width:1000px;text-align:right;top:1454.85px;font-size:29px;color:#000;">2016</div>
<div class="t" style="left:214px;top:1454.85px;font-size:29px;color:#000;">Bikes</div>
<div class="t" style="left:415.2px;top:1454.85px;font-size:29px;color:#000;">Road Bikes</div>
<div class="t" style="left:677px;top:1454.85px;font-size:29px;color:#000;">$</div>
<div class="t" style="left:-206.5px;width:1000px;text-align:right;top:1454.85px;font-size:29px;color:#000;">11,600</div>
<div class="t" style="left:-49.5px;width:1000px;text-align:right;top:1454.85px;font-size:29px;color:#000;">90%</div>
<div class="a" style="left:0px;top:376px;width:88px;height:1100px;background:#f2f2f2;z-index:0"></div>
<div class="a" style="left:0px;top:362px;width:88px;height:2px;background:#d8d8d8;"></div>
<div class="a" style="left:0px;top:407px;width:88px;height:2px;background:#d8d8d8;"></div>
<div class="a" style="left:0px;top:452px;width:88px;height:2px;background:#d8d8d8;"></div>
<div class="a" style="left:0px;top:497px;width:88px;height:2px;background:#d8d8d8;"></div>
<div class="a" style="left:0px;top:542px;width:88px;height:2px;background:#d8d8d8;"></div>
<div class="a" style="left:0px;top:587px;width:88px;height:2px;background:#d8d8d8;"></div>
<div class="a" style="left:0px;top:632px;width:88px;height:2px;background:#d8d8d8;"></div>
<div class="a" style="left:0px;top:677px;width:88px;height:2px;background:#d8d8d8;"></div>
<div class="a" style="left:0px;top:722px;width:88px;height:2px;background:#d8d8d8;"></div>
<div class="a" style="left:0px;top:767px;width:88px;height:2px;background:#d8d8d8;"></div>
<div class="a" style="left:0px;top:812px;width:88px;height:2px;background:#d8d8d8;"></div>
<div class="a" style="left:0px;top:857px;width:88px;height:2px;background:#d8d8d8;"></div>
<div class="a" style="left:0px;top:902px;width:88px;height:2px;background:#d8d8d8;"></div>
<div class="a" style="left:0px;top:947px;width:88px;height:2px;background:#d8d8d8;"></div>
<div class="a" style="left:0px;top:992px;width:88px;height:2px;background:#d8d8d8;"></div>
<div class="a" style="left:0px;top:1037px;width:88px;height:2px;background:#d8d8d8;"></div>
<div class="a" style="left:0px;top:1082px;width:88px;height:2px;background:#d8d8d8;"></div>
<div class="a" style="left:0px;top:1127px;width:88px;height:2px;background:#d8d8d8;"></div>
<div class="a" style="left:0px;top:1172px;width:88px;height:2px;background:#d8d8d8;"></div>
<div class="a" style="left:0px;top:1217px;width:88px;height:2px;background:#d8d8d8;"></div>
<div class="a" style="left:0px;top:1262px;width:88px;height:2px;background:#d8d8d8;"></div>
<div class="a" style="left:0px;top:1307px;width:88px;height:2px;background:#d8d8d8;"></div>
<div class="a" style="left:0px;top:1352px;width:88px;height:2px;background:#d8d8d8;"></div>
<div class="a" style="left:0px;top:1397px;width:88px;height:2px;background:#d8d8d8;"></div>
<div class="a" style="left:0px;top:1442px;width:88px;height:2px;background:#d8d8d8;"></div>
<div class="a" style="left:0px;top:1487px;width:88px;height:2px;background:#d8d8d8;"></div>
<div class="a" style="left:0px;top:544px;width:88px;height:43px;background:#d5d5d5;"></div>
<div class="a" style="left:88px;top:376px;width:1.3px;height:1100px;background:#cfcfcf;"></div>
<div class="t" style="left:-456px;width:1000px;text-align:center;top:374.43px;font-size:29.5px;color:#3a3a3a;">8</div>
<div class="t" style="left:-456px;width:1000px;text-align:center;top:419.43px;font-size:29.5px;color:#3a3a3a;">9</div>
<div class="t" style="left:-456px;width:1000px;text-align:center;top:464.43px;font-size:29.5px;color:#3a3a3a;">10</div>
<div class="t" style="left:-456px;width:1000px;text-align:center;top:509.43px;font-size:29.5px;color:#3a3a3a;">11</div>
<div class="t" style="left:-456px;width:1000px;text-align:center;top:554.42px;font-size:29.5px;color:#3a3a3a;">12</div>
<div class="t" style="left:-456px;width:1000px;text-align:center;top:599.42px;font-size:29.5px;color:#3a3a3a;">13</div>
<div class="t" style="left:-456px;width:1000px;text-align:center;top:644.42px;font-size:29.5px;color:#3a3a3a;">14</div>
<div class="t" style="left:-456px;width:1000px;text-align:center;top:689.42px;font-size:29.5px;color:#3a3a3a;">15</div>
<div class="t" style="left:-456px;width:1000px;text-align:center;top:734.42px;font-size:29.5px;color:#3a3a3a;">16</div>
<div class="t" style="left:-456px;width:1000px;text-align:center;top:779.42px;font-size:29.5px;color:#3a3a3a;">17</div>
<div class="t" style="left:-456px;width:1000px;text-align:center;top:824.42px;font-size:29.5px;color:#3a3a3a;">18</div>
<div class="t" style="left:-456px;width:1000px;text-align:center;top:869.42px;font-size:29.5px;color:#3a3a3a;">19</div>
<div class="t" style="left:-456px;width:1000px;text-align:center;top:914.42px;font-size:29.5px;color:#3a3a3a;">20</div>
<div class="t" style="left:-456px;width:1000px;text-align:center;top:959.42px;font-size:29.5px;color:#3a3a3a;">21</div>
<div class="t" style="left:-456px;width:1000px;text-align:center;top:1004.42px;font-size:29.5px;color:#3a3a3a;">22</div>
<div class="t" style="left:-456px;width:1000px;text-align:center;top:1049.42px;font-size:29.5px;color:#3a3a3a;">23</div>
<div class="t" style="left:-456px;width:1000px;text-align:center;top:1094.42px;font-size:29.5px;color:#3a3a3a;">24</div>
<div class="t" style="left:-456px;width:1000px;text-align:center;top:1139.42px;font-size:29.5px;color:#3a3a3a;">25</div>
<div class="t" style="left:-456px;width:1000px;text-align:center;top:1184.42px;font-size:29.5px;color:#3a3a3a;">26</div>
<div class="t" style="left:-456px;width:1000px;text-align:center;top:1229.42px;font-size:29.5px;color:#3a3a3a;">27</div>
<div class="t" style="left:-456px;width:1000px;text-align:center;top:1274.42px;font-size:29.5px;color:#3a3a3a;">28</div>
<div class="t" style="left:-456px;width:1000px;text-align:center;top:1319.42px;font-size:29.5px;color:#3a3a3a;">29</div>
<div class="t" style="left:-456px;width:1000px;text-align:center;top:1364.42px;font-size:29.5px;color:#3a3a3a;">30</div>
<div class="t" style="left:-456px;width:1000px;text-align:center;top:1409.42px;font-size:29.5px;color:#3a3a3a;">31</div>
<div class="t" style="left:-456px;width:1000px;text-align:center;top:1454.42px;font-size:29.5px;color:#3a3a3a;">32</div>
<div class="a" style="left:0px;top:314px;width:1408px;height:60px;background:#f2f2f2;"></div>
<div class="a" style="left:88px;top:314px;width:122px;height:58px;background:#d5d5d5;"></div>
<div class="a" style="left:0px;top:374px;width:1408px;height:2px;background:#cbcbcb;"></div>
<div class="a" style="left:90px;top:372px;width:120px;height:4px;background:#1e7145;"></div>
<div class="a" style="left:88px;top:314px;width:1.5px;height:60px;background:#d2d2d2;"></div>
<div class="a" style="left:209.3px;top:314px;width:1.5px;height:60px;background:#d2d2d2;"></div>
<div class="a" style="left:409.3px;top:314px;width:1.5px;height:60px;background:#d2d2d2;"></div>
<div class="a" style="left:659.8px;top:314px;width:1.5px;height:60px;background:#d2d2d2;"></div>
<div class="a" style="left:807.3px;top:314px;width:1.5px;height:60px;background:#d2d2d2;"></div>
<div class="a" style="left:954.5px;top:314px;width:1.5px;height:60px;background:#d2d2d2;"></div>
<div class="a" style="left:1097.8px;top:314px;width:1.5px;height:60px;background:#d2d2d2;"></div>
<div class="a" style="left:1290.5px;top:314px;width:1.5px;height:60px;background:#d2d2d2;"></div>
<svg width="10" height="10" style="left:0;top:0"><path d="M33,357.5 L56,335.5 V357.5 Z" fill="#7b7b7b"/></svg>
<div class="t" style="left:92px;top:332.73px;font-size:29.5px;color:#3e3e3e;">Year</div>
<div class="t" style="left:212.5px;top:332.73px;font-size:29.5px;color:#3e3e3e;">Category</div>
<div class="t" style="left:414.5px;top:332.73px;font-size:29.5px;color:#3e3e3e;">Product</div>
<div class="t" style="left:665px;top:332.73px;font-size:29.5px;color:#3e3e3e;">Sales</div>
<div class="t" style="left:813px;top:332.73px;font-size:29.5px;color:#3e3e3e;">Rating</div>
<div class="t" style="left:527.5px;width:1000px;text-align:center;top:333.05px;font-size:29px;color:#333;">F</div>
<div class="t" style="left:695.5px;width:1000px;text-align:center;top:333.05px;font-size:29px;color:#333;">G</div>
<div class="t" style="left:905px;width:1000px;text-align:center;top:333.05px;font-size:29px;color:#333;">H</div>
<div class="a" style="left:169.0px;top:323.3px;width:37.5px;height:36px;background:#fff;border:1px solid #c2c2c2;border-radius:5px"></div>
<svg width="10" height="10" style="left:0;top:0"><path d="M180.75,336.5 H194.75 L187.75,346 Z" fill="#6b6b6b"/></svg>
<div class="a" style="left:369.7px;top:323.3px;width:37.5px;height:36px;background:#fff;border:1px solid #c2c2c2;border-radius:5px"></div>
<svg width="10" height="10" style="left:0;top:0"><path d="M381.45,336.5 H395.45 L388.45,346 Z" fill="#6b6b6b"/></svg>
<div class="a" style="left:620.5px;top:323.3px;width:37.5px;height:36px;background:#fff;border:1px solid #c2c2c2;border-radius:5px"></div>
<svg width="10" height="10" style="left:0;top:0"><path d="M632.25,336.5 H646.25 L639.25,346 Z" fill="#6b6b6b"/></svg>
<div class="a" style="left:767.5px;top:323.3px;width:37.5px;height:36px;background:#fff;border:1px solid #c2c2c2;border-radius:5px"></div>
<svg width="10" height="10" style="left:0;top:0"><path d="M779.25,336.5 H793.25 L786.25,346 Z" fill="#6b6b6b"/></svg>
<div class="a" style="left:914.5px;top:323.3px;width:37.5px;height:36px;background:#fff;border:1px solid #c2c2c2;border-radius:5px"></div>
<svg width="10" height="10" style="left:0;top:0"><path d="M926.25,336.5 H940.25 L933.25,346 Z" fill="#6b6b6b"/></svg>
<div class="a" style="left:90px;top:543.8px;width:118px;height:2.2px;background:#fff;"></div>
<div class="a" style="left:90px;top:543.8px;width:2.2px;height:43.4px;background:#fff;"></div>
<div class="a" style="left:205.8px;top:543.8px;width:2.2px;height:43.4px;background:#fff;"></div>
<div class="a" style="left:90px;top:585px;width:118px;height:2.2px;background:#fff;"></div>
<div class="a" style="left:86.5px;top:540.2px;width:125px;height:3.6px;background:#1e7145;"></div>
<div class="a" style="left:86.5px;top:540.2px;width:3.6px;height:50.5px;background:#1e7145;"></div>
<div class="a" style="left:208px;top:540.2px;width:3.6px;height:50.5px;background:#1e7145;"></div>
<div class="a" style="left:86.5px;top:587.2px;width:125px;height:3.6px;background:#1e7145;"></div>
<svg width="10" height="10" style="left:0;top:0"><rect x="112" y="583.5" width="76" height="12" rx="6" fill="#fff"/><rect x="114.5" y="585.8" width="71" height="7.4" rx="3.7" fill="#1e7145"/><circle cx="88.3" cy="542.4" r="13" fill="#fff"/><circle cx="88.3" cy="542.4" r="9.2" fill="#1e7145"/><circle cx="210.5" cy="589.4" r="13" fill="#fff"/><circle cx="210.5" cy="589.4" r="9.2" fill="#1e7145"/></svg>
</div>
</div>

<div class="a" style="left:0;top:1458px;width:1408px;height:78px;background:#f1f1f1"></div>
<div class="a" style="left:0;top:1458px;width:1408px;height:10px;background:linear-gradient(#e9e9e9,#f1f1f1)"></div>
<div class="a" style="left:0px;top:1458px;width:1408px;height:1px;background:#c6c6c6;"></div>
<div class="a" style="left:79px;top:1458px;width:214px;height:66.6px;background:#fff;border:1px solid #d8d8d8;border-top:none;border-radius:0 0 5px 5px"></div>
<div class="t" style="left:118px;top:1477.58px;font-size:29.2px;color:#2e7d4f;">PivotTable</div>
<svg width="10" height="10" style="left:0;top:0"><path d="M340.4,1477.5 V1504 M327,1490.7 H353.8" stroke="#555" stroke-width="2.6"/></svg>
<div class="a" style="left:385px;top:1458px;width:1.3px;height:66px;background:#d4d4d4;"></div>

<div class="a" style="left:1408px;top:228px;width:640px;height:1308px;background:#f4f4f4"></div>
<div class="t" style="left:1450px;top:263.45px;font-size:33px;color:#1f1f1f;font-weight:bold;">Insert PivotTable</div>
<svg width="10" height="10" style="left:0;top:0"><circle cx="1976" cy="277.6" r="18.3" fill="none" stroke="#5a5a5a" stroke-width="3"/><path d="M1969,270.6 L1983,284.6 M1983,270.6 L1969,284.6" stroke="#5a5a5a" stroke-width="3" stroke-linecap="round"/></svg>
<div class="a" style="left:1430px;top:338px;width:598px;height:150px;background:#fff;border-radius:20px"></div>
<div class="t" style="left:1457px;top:361.64px;font-size:26.3px;color:#666;">Source</div>
<svg width="10" height="10" style="left:0;top:0"><rect x="1469.8" y="419.6" width="40.4" height="40.4" rx="6.5" fill="none" stroke="#8a8a8a" stroke-width="3.6"/><path d="M1490,420 V460 M1470,440 H1510" stroke="#8a8a8a" stroke-width="3.6"/></svg>
<div class="t" style="left:1551px;top:420.80px;font-size:32px;color:#111;">Table1</div>
<div class="t" style="left:1429.5px;top:528.57px;font-size:30.8px;color:#222;">Insertion location</div>
<div class="a" style="left:1430px;top:564.6px;width:598px;height:94.8px;background:#fff;border-radius:20px"></div>
<div class="t" style="left:1461.5px;top:598.27px;font-size:33.8px;color:#222;">Insert on new sheet</div>
<div class="a" style="left:1894px;top:582.3px;width:102px;height:61.5px;background:#117d43;border-radius:31px"></div>
<div class="a" style="left:1937.4px;top:585.8px;width:54.6px;height:54.6px;background:#fff;border-radius:50%"></div>
<div class="a" style="left:1430.4px;top:720.4px;width:290px;height:78.8px;border:2px solid #66a57f;border-radius:16px"></div>
<div class="t" style="left:1075px;width:1000px;text-align:center;top:748.08px;font-size:25.5px;color:#1d7a47;font-weight:bold;">Cancel</div>
<div class="a" style="left:1737.4px;top:719.8px;width:290.6px;height:80.2px;background:#117d43;border-radius:16px"></div>
<div class="t" style="left:1382px;width:1000px;text-align:center;top:747.65px;font-size:26px;color:#fff;font-weight:bold;">Insert</div>

</body></html>
